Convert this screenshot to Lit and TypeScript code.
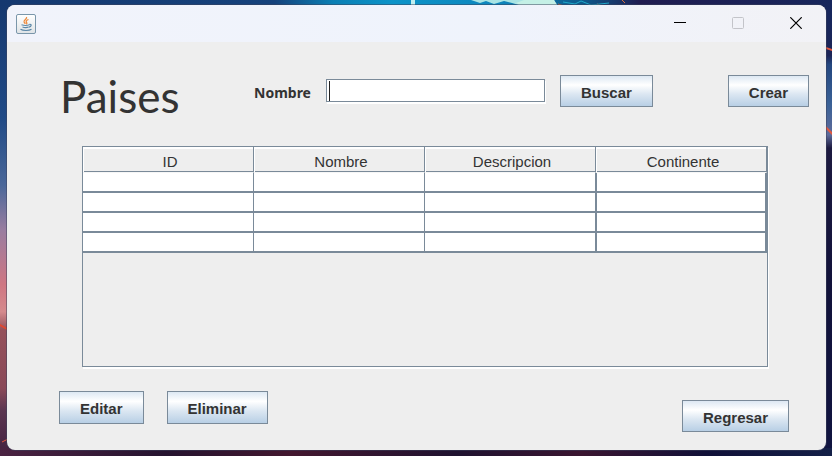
import { LitElement, html, css, svg } from "lit";
import { customElement, property } from "lit/decorators.js";

const COLUMNS = ["ID", "Nombre", "Descripcion", "Continente"];
const ROWS = [1, 2, 3, 4];

/** Desktop wallpaper that shows around the window. */
@customElement("desk-wallpaper")
class DeskWallpaper extends LitElement {
  static styles = css`
    :host {
      display: block;
      position: absolute;
      inset: 0;
      z-index: -1;
    }
    svg {
      display: block;
      width: 100%;
      height: 100%;
    }
  `;

  render() {
    const stops = (list: [number, string][]) =>
      list.map(([o, c]) => svg`<stop offset=${o} stop-color=${c}></stop>`);
    return html`
      <svg viewBox="0 0 832 456" preserveAspectRatio="none" aria-hidden="true">
        <defs>
          <linearGradient id="sky">
            ${stops([[0, "#15386f"], [0.33, "#16427c"], [0.4, "#0b7fb4"], [0.47, "#0c93c8"], [0.6, "#0d86bd"], [0.7, "#0d5b8c"], [0.77, "#201c50"], [1, "#17265c"]])}
          </linearGradient>
          <linearGradient id="west" x1="0" y1="0" x2="0" y2="1">
            ${stops([[0, "#15386f"], [0.25, "#204a86"], [0.4, "#4a6799"], [0.5, "#9a7da0"], [0.62, "#cf7682"], [0.68, "#d58a8d"], [0.72, "#94505a"], [0.85, "#8a4958"], [0.9, "#5a3550"], [1, "#43203f"]])}
          </linearGradient>
          <linearGradient id="east" x1="0" y1="0" x2="0" y2="1">
            ${stops([[0, "#17265c"], [0.09, "#1c2557"], [0.11, "#24477f"], [0.2, "#3a6196"], [0.27, "#5e6b9b"], [0.3, "#1d1a40"], [0.6, "#12123a"], [1, "#101440"]])}
          </linearGradient>
          <linearGradient id="south">
            ${stops([[0, "#4b2342"], [0.2, "#25132f"], [0.35, "#43172f"], [0.55, "#1f1230"], [0.7, "#3a1530"], [0.85, "#101038"], [1, "#142048"]])}
          </linearGradient>
        </defs>
        <rect width="832" height="456" fill="url(#sky)"></rect>
        <rect y="5" width="20" height="451" fill="url(#west)"></rect>
        <rect x="812" y="16" width="20" height="440" fill="url(#east)"></rect>
        <rect y="448" width="832" height="8" fill="url(#south)"></rect>
        <path d="M411 0h4v6h-4z" fill="#bfeef0"></path>
        <path d="M471 0l9 3 6-2 8 3 10-3 8 2 10 3h35l-3-6z" fill="#a9e4e4"></path>
        <path d="M522 6l-6-3 8-3h30l4 6z" fill="#c4f0e6"></path>
        <path d="M558 4l6 2M597 4l5 2M622 0l3 3" stroke="#d8703f" fill="none"></path>
        <path d="M563 2l12 2 6-3 10 4 18-2" stroke="#1fa9c9" fill="none"></path>
        <path d="M0 324l7 4v2l-7-4z" fill="#e3472f"></path>
        <path d="M826 47l6 2v2l-6-2zM826 126l6 6v3l-6-6z" fill="#e3583f"></path>
        <path d="M2 442l6-3" stroke="#e3583f" fill="none"></path>
      </svg>
    `;
  }
}

/** Push button with the Metal look: bluish gradient and a slate outline. */
@customElement("metal-button")
class MetalButton extends LitElement {
  @property() label = "";

  static styles = css`
    :host {
      display: block;
    }
    button {
      display: block;
      height: 32px;
      padding: 3px 20px 0;
      border: 1px solid #7a8a99;
      border-radius: 0;
      background: linear-gradient(#dde8f3, #fff 30%, #dce7f2 60%, #b8cfe5);
      color: #333;
      font: bold 15px/27px "Liberation Sans", Arial, sans-serif;
      white-space: nowrap;
    }
    :host([tall]) button {
      height: 33px;
      line-height: 28px;
    }
  `;

  render() {
    return html`<button type="button">${this.label}</button>`;
  }
}

@customElement("app-root")
class AppRoot extends LitElement {
  static styles = css`
    :host {
      display: flex;
      position: relative;
      z-index: 0;
      box-sizing: border-box;
      min-height: 100vh;
      padding: 5px 6px 6px 7px;
      color: #333;
      font: 15px/20px "Liberation Sans", Arial, sans-serif;
    }
    .window {
      flex: 1;
      min-width: 0;
      display: flex;
      flex-direction: column;
      border-radius: 8px;
      overflow: hidden;
      background: #eee;
      box-shadow: 0 0 0 1px #3c415c80;
    }
    .titlebar {
      display: flex;
      align-items: center;
      justify-content: space-between;
      height: 37px;
      padding: 0 1px 0 9px;
      background: linear-gradient(90deg, #f1f3fb, #eff3fc 60%, #f2f2f6);
    }
    .titlebar svg {
      display: block;
    }
    .controls {
      display: flex;
    }
    .controls button {
      display: grid;
      place-items: center;
      width: 58px;
      height: 36px;
      padding: 0 1px 2px 0;
      border: 0;
      background: none;
    }
    .toolbar {
      display: flex;
      align-items: center;
      padding: 33px 17px 0 53px;
    }
    h1 {
      flex: none;
      width: 194px;
      height: 32px;
      margin: 0;
      font: 44px/42px Lato, "Open Sans", sans-serif;
    }
    form {
      flex: 1;
      min-width: 0;
      display: flex;
      align-items: center;
      gap: 15px;
    }
    label {
      padding-top: 4px;
      font: bold 14px/20px "Noto Sans", sans-serif;
    }
    input {
      flex: 0 1 219px;
      min-width: 0;
      box-sizing: border-box;
      height: 23px;
      margin: 0 0 1px;
      padding: 0 4px;
      border: 1px solid #7a8a99;
      border-radius: 0;
      outline: none;
      background: linear-gradient(#222, #222) 2px 1px / 1px 20px no-repeat #fff;
      box-shadow: 1px 2px 0 #fff;
      color: #333;
      font: inherit;
    }
    .viewport {
      flex: 1;
      margin: 39px 58px 0 75px;
      border: 1px solid #7a8a99;
      box-shadow: 1px 2px 0 #fff;
    }
    table {
      width: 100%;
      table-layout: fixed;
      border-collapse: separate;
      border-spacing: 0;
    }
    th {
      box-sizing: border-box;
      height: 26px;
      padding: 4px 0 0 4px;
      border-right: 1px solid #7a8a99;
      border-bottom: 1px solid #f6f6f6;
      box-shadow: inset 1px 0 #fff, inset 0 -1px #7a8a99, inset 0 2px #fff;
      font-weight: normal;
      line-height: 20px;
      text-align: center;
    }
    td {
      box-sizing: border-box;
      height: 20px;
      padding: 0;
      border-right: 1px solid #7a8a99;
      border-bottom: 2px solid #7a8a99;
      background: #fff;
    }
    td:last-child {
      border-left: 1px solid #7a8a99;
      border-right-width: 2px;
    }
    .footer {
      display: flex;
      justify-content: space-between;
      min-height: 41px;
      padding: 24px 37px 18px 52px;
    }
    .row-actions {
      display: flex;
      gap: 23px;
    }
    .back {
      align-self: flex-end;
    }
  `;

  render() {
    return html`
      <desk-wallpaper></desk-wallpaper>
      <main class="window">
        <header class="titlebar">
          <svg width="20" height="20" viewBox="0 0 20 20" aria-hidden="true">
            <defs>
              <linearGradient id="tile" x1="0" y1="0" x2="0" y2="1">
                <stop offset="0" stop-color="#fff"></stop>
                <stop offset="1" stop-color="#dfe3e6"></stop>
              </linearGradient>
            </defs>
            <rect x=".5" y=".5" width="19" height="19" rx="1.5" fill="url(#tile)" stroke="#7a96aa"></rect>
            <path d="M10.500 3c1.200 2-3.200 3-2.400 5 .3.700 1 1.200 1.300 1.800M12.500 5.500c-2.500 1-2.800 2-1.800 3.200.5.700 0 1.200-.4 1.500" fill="none" stroke="#ee8a3c" stroke-width="1.300"></path>
            <path d="M5.500 10.800c2 .7 6 .7 8 0M6.500 13c1.800.6 4.500.6 6.200 0M13.500 10.300c2.500-.2 2 2.300-.5 2.900M4.500 15.300c2.500 1.600 8.500 1.600 11 0" fill="none" stroke="#5b87a8" stroke-width="1.200"></path>
          </svg>
          <div class="controls">
            <button type="button" aria-label="Minimizar">
              <svg width="12" height="12"><path d="M0 5.500h12" stroke="#000"></path></svg>
            </button>
            <button type="button" aria-label="Maximizar" disabled>
              <svg width="12" height="12"><rect x=".5" y=".5" width="11" height="11" rx="1" fill="none" stroke="#c3c4c9"></rect></svg>
            </button>
            <button type="button" aria-label="Cerrar">
              <svg width="12" height="12"><path d="M.3.3l11.400 11.400M11.700.3L.3 11.700" stroke="#000" stroke-width="1.200"></path></svg>
            </button>
          </div>
        </header>
        <section class="toolbar">
          <h1>Paises</h1>
          <form>
            <label for="nombre">Nombre</label>
            <input id="nombre" type="text" />
            <metal-button label="Buscar"></metal-button>
          </form>
          <metal-button label="Crear"></metal-button>
        </section>
        <div class="viewport">
          <table>
            <thead>
              <tr>${COLUMNS.map((c) => html`<th scope="col">${c}</th>`)}</tr>
            </thead>
            <tbody>
              ${ROWS.map(() => html`<tr>${COLUMNS.map(() => html`<td></td>`)}</tr>`)}
            </tbody>
          </table>
        </div>
        <footer class="footer">
          <div class="row-actions">
            <metal-button tall label="Editar"></metal-button>
            <metal-button tall label="Eliminar"></metal-button>
          </div>
          <metal-button class="back" label="Regresar"></metal-button>
        </footer>
      </main>
    `;
  }
}
